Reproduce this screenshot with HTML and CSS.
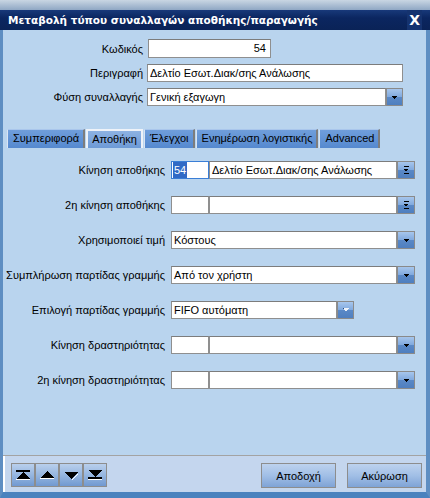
FILE: index.html
```html
<!DOCTYPE html>
<html lang="el">
<head>
<meta charset="utf-8">
<title>Μεταβολή τύπου συναλλαγών αποθήκης/παραγωγής</title>
<link rel="stylesheet" href="styles.css">
</head>
<body>
<div class="win">
  <div class="titlebar">
    <div class="title-band">
      <span class="title">Μεταβολή τύπου συναλλαγών αποθήκης/παραγωγής</span>
      <span class="close">X</span>
    </div>
  </div>
  <div class="frame">
    <div class="main">
      <div class="head-form">
        <label class="lbl">Κωδικός</label>
        <div class="field w-id num">54</div>
        <label class="lbl">Περιγραφή</label>
        <div class="field w-desc">Δελτίο Εσωτ.Διακ/σης Ανάλωσης</div>
        <label class="lbl">Φύση συναλλαγής</label>
        <div class="ctl">
          <div class="field w-nat">Γενική εξαγωγη</div>
          <div class="dd sm"><svg width="5" height="3" viewBox="0 0 5 3" shape-rendering="crispEdges"><path d="M0 0H5L2.5 3Z" fill="#000"/></svg></div>
        </div>
      </div>

      <div class="tabs">
        <div class="tab">Συμπεριφορά</div>
        <div class="tab active">Αποθήκη</div>
        <div class="tab">Έλεγχοι</div>
        <div class="tab">Ενημέρωση λογιστικής</div>
        <div class="tab">Advanced</div>
      </div>

      <div class="tab-form">
        <label class="lbl">Κίνηση αποθήκης</label>
        <div class="ctl">
          <div class="field w-code focus"><span class="sel">54</span></div>
          <div class="field w-name">Δελτίο Εσωτ.Διακ/σης Ανάλωσης</div>
          <div class="dd"><svg width="6" height="8" viewBox="0 0 6 8" shape-rendering="crispEdges"><path d="M0.5 0H5.5V1H0.5Z M0.5 2.5H5.5L3 5.5Z M0.5 7H5.5V8H0.5Z" fill="#000"/></svg></div>
        </div>

        <label class="lbl">2η κίνηση αποθήκης</label>
        <div class="ctl">
          <div class="field w-code"></div>
          <div class="field w-name"></div>
          <div class="dd"><svg width="6" height="8" viewBox="0 0 6 8" shape-rendering="crispEdges"><path d="M0.5 0H5.5V1H0.5Z M0.5 2.5H5.5L3 5.5Z M0.5 7H5.5V8H0.5Z" fill="#000"/></svg></div>
        </div>

        <label class="lbl">Χρησιμοποιεί τιμή</label>
        <div class="ctl">
          <div class="field w-sel">Κόστους</div>
          <div class="dd"><svg width="5" height="3" viewBox="0 0 5 3" shape-rendering="crispEdges"><path d="M0 0H5L2.5 3Z" fill="#000"/></svg></div>
        </div>

        <label class="lbl">Συμπλήρωση παρτίδας γραμμής</label>
        <div class="ctl">
          <div class="field w-sel">Από τον χρήστη</div>
          <div class="dd"><svg width="5" height="3" viewBox="0 0 5 3" shape-rendering="crispEdges"><path d="M0 0H5L2.5 3Z" fill="#000"/></svg></div>
        </div>

        <label class="lbl">Επιλογή παρτίδας γραμμής</label>
        <div class="ctl">
          <div class="field w-short">FIFO αυτόματη</div>
          <div class="dd sm"><svg width="6" height="4" viewBox="0 0 6 4" shape-rendering="crispEdges"><path d="M0 0H6L3 3.5Z" fill="#eef3fa"/><path d="M0 0H1V1H0Z" fill="#2a4a78"/></svg></div>
        </div>

        <label class="lbl">Κίνηση δραστηριότητας</label>
        <div class="ctl">
          <div class="field w-code"></div>
          <div class="field w-name"></div>
          <div class="dd"><svg width="5" height="3" viewBox="0 0 5 3" shape-rendering="crispEdges"><path d="M0 0H5L2.5 3Z" fill="#000"/></svg></div>
        </div>

        <label class="lbl">2η κίνηση δραστηριότητας</label>
        <div class="ctl">
          <div class="field w-code"></div>
          <div class="field w-name"></div>
          <div class="dd"><svg width="5" height="3" viewBox="0 0 5 3" shape-rendering="crispEdges"><path d="M0 0H5L2.5 3Z" fill="#000"/></svg></div>
        </div>
      </div>
    </div>

    <div class="footer">
      <div class="nav">
        <button class="nbtn" title="Πρώτο"><svg width="14" height="11" viewBox="0 0 14 11" shape-rendering="crispEdges"><path d="M0 0H14V2H0Z" fill="#000"/><path d="M7 2L14 9H0Z" fill="#000"/><path d="M0 9H14V10H0Z" fill="#fff"/></svg></button>
        <button class="nbtn" title="Προηγούμενο"><svg width="14" height="9" viewBox="0 0 14 9" shape-rendering="crispEdges"><path d="M7 0L14 7H0Z" fill="#000"/><path d="M0 7H14V8H0Z" fill="#fff"/></svg></button>
        <button class="nbtn" title="Επόμενο"><svg width="14" height="9" viewBox="0 0 14 9" shape-rendering="crispEdges"><path d="M0 1H14L7 8Z" fill="#000"/><path d="M8 8L14 2V3L8 9Z" fill="#fff"/></svg></button>
        <button class="nbtn" title="Τελευταίο"><svg width="14" height="11" viewBox="0 0 14 11" shape-rendering="crispEdges"><path d="M0 0H14L7 7Z" fill="#000"/><path d="M0 7H14V9H0Z" fill="#000"/><path d="M0 9H14V10H0Z" fill="#fff"/></svg></button>
      </div>
      <div class="actions">
        <button class="btn">Αποδοχή</button>
        <button class="btn">Ακύρωση</button>
      </div>
    </div>
  </div>
</div>
</body>
</html>
```
FILE: styles.css
```css
* { box-sizing: border-box; }
html, body { margin: 0; padding: 0; }
body {
  width: 430px;
  height: 498px;
  overflow: hidden;
  font-family: "Liberation Sans", Arial, sans-serif;
  font-size: 11px;
  color: #000;
  background: #b9d4ee;
}
.win {
  width: 430px;
  height: 498px;
  display: flex;
  flex-direction: column;
}
.titlebar {
  height: 30px;
  flex: none;
  padding-top: 10px;
  background: linear-gradient(#c9d6e3, #8fa7c4 10px);
}
.title-band {
  height: 20px;
  display: flex;
  align-items: center;
  justify-content: space-between;
  padding: 0 8px 0 8px;
  background: linear-gradient(#18397a, #0b2660 40%, #0a2357);
}
.title {
  color: #fff;
  font-family: "DejaVu Sans", Verdana, sans-serif;
  font-weight: bold;
  font-size: 10.5px;
}
.close {
  color: #fff;
  font-family: "DejaVu Sans", Verdana, sans-serif;
  font-weight: bold;
  font-size: 14px;
  line-height: 20px;
  padding: 0 2px;
  background: #15336f;
}
.frame {
  flex: 1;
  display: flex;
  flex-direction: column;
  border-left: 3px solid #5e8ec2;
  border-right: 4px solid #5e8ec2;
  border-bottom: 6px solid #4a82be;
  background: #b9d4ee;
}
.main {
  flex: 1;
}
.lbl {
  text-align: right;
  white-space: nowrap;
}
.head-form {
  display: grid;
  grid-template-columns: 140px max-content;
  grid-template-rows: 19px 18px 18px;
  column-gap: 4px;
  row-gap: 6px;
  align-items: center;
  padding-top: 9px;
}
.ctl {
  display: flex;
  height: 18px;
}
.field {
  height: 18px;
  background: #fff;
  border: 1px solid #8f8f8f;
  border-top-color: #7c7c7c;
  line-height: 16px;
  padding: 0 2px;
  white-space: nowrap;
  overflow: hidden;
}
.w-id { width: 123px; height: 19px; margin-left: 1px; }
.num { text-align: right; padding-right: 4px; line-height: 17px; }
.w-desc { width: 256px; }
.w-nat { width: 239px; }
.w-code { width: 38px; }
.w-name { width: 188px; }
.w-sel { width: 226px; }
.w-short { width: 166px; }
.focus { border-color: #3a7ed6; padding-left: 1px; }
.sel { background: #316ac5; color: #fff; display: inline-block; line-height: 16px; padding: 0 1px; }
.dd {
  width: 18px;
  height: 18px;
  flex: none;
  border: 1px solid #8a8a8a;
  background: linear-gradient(#a7c6ec, #80a9de 50%, #5a89c7 51%, #4f7fbf);
  display: flex;
  align-items: center;
  justify-content: center;
}
.dd.sm { width: 17px; }
.dd svg { display: block; }

.tabs {
  display: flex;
  gap: 1px;
  margin: 23px 0 0 4px;
  height: 19px;
}
.tab {
  height: 19px;
  line-height: 17px;
  padding: 0 4px 0 5px;
  background: linear-gradient(#6f9edb, #5589cf);
  border-top: 1px solid #a9c6ec;
  border-left: 1px solid #d8e4f3;
  border-right: 2px solid #7d7d7d;
  white-space: nowrap;
}
.tab.active {
  background: linear-gradient(#8db2e2, #6d9ad6);
  border: 2px solid #eef2f8;
  border-bottom: none;
  line-height: 16px;
  padding: 0 4px;
}

.tab-form {
  display: grid;
  grid-template-columns: 162px max-content;
  grid-auto-rows: 18px;
  column-gap: 6px;
  row-gap: 17px;
  align-items: center;
  margin-top: 13px;
}

.footer {
  height: 37px;
  flex: none;
  display: flex;
  align-items: flex-start;
  justify-content: space-between;
  padding: 7px 4px 0 8px;
  background: #c4d6ee;
  border-top: 1px solid #a3a3a3;
  box-shadow: inset 2px 0 0 #ffffff;
}
.nav {
  display: flex;
}
.nbtn {
  width: 24px;
  height: 24px;
  padding: 0;
  margin: 0;
  border: 1px solid #8d8d8d;
  background: linear-gradient(#b9cfec, #96b6e0 50%, #7199d0);
  display: flex;
  align-items: center;
  justify-content: center;
}
.nbtn svg { display: block; }
.actions {
  display: flex;
  gap: 11px;
}
.btn {
  width: 75px;
  height: 25px;
  margin: 0;
  padding: 0;
  font-family: "Liberation Sans", Arial, sans-serif;
  font-size: 11px;
  color: #000;
  border: 1px solid #8d8d8d;
  background: linear-gradient(#bdd2ee, #a1bfe6 50%, #7fa3d6);
}
```
